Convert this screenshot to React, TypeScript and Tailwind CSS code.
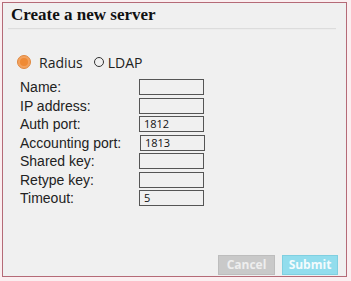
export default function App() {
  const rows: [string, string, string][] = [
    ["Name:", "", "ml-0"],
    ["IP address:", "", "ml-0"],
    ["Auth port:", "1812", "ml-0"],
    ["Accounting port:", "1813", "ml-[1px]"],
    ["Shared key:", "", "ml-0"],
    ["Retype key:", "", "ml-0"],
    ["Timeout:", "5", "ml-0"],
  ];
  return (
    <div className="w-[351px] h-[281px] bg-[#fbeef0] pt-[2px] pl-[2px]">
      <div className="w-[345px] h-[275px] border border-[#b56a77] bg-[#f0f0f0] flex flex-col">
        <div className="h-[25px] pl-[8px] pt-[1px] text-[17px] font-bold leading-[22px] text-[#111] [font-family:'Liberation_Serif',serif]">
          Create a new server
        </div>
        <div className="ml-[5px] mr-[10px] h-[2px] bg-[#dcdcdc] border-b border-[#ececec]" />
        <div className="text-[#222]">
          <div className="flex items-center h-[20px] mt-[22px] pl-[14px] [font-family:'Open_Sans',sans-serif]">
            <span className="w-[14px] h-[14px] rounded-full bg-[#f3a25e] border border-[#e0883f] flex items-center justify-center">
              <span className="w-[8px] h-[8px] rounded-full bg-[#ef8a35]" />
            </span>
            <span className="ml-[8px] text-[14px]">Radius</span>
            <span className="ml-[11px] w-[10px] h-[10px] rounded-full border border-[#333]" />
            <span className="ml-[4px] text-[14px]">LDAP</span>
          </div>
          <div className="flex flex-col mt-[6px] pl-[17px]">
            {rows.map(([label, value, off]) => (
              <div key={label} className="flex items-center h-[18.5px]">
                <span className="w-[119px] leading-[16px] text-[14px] [font-family:'Liberation_Sans',sans-serif]">{label}</span>
                <div
                  className={`${off} w-[65px] h-[16px] border border-[#555] bg-[#f0f0f0] text-[11px] leading-[14px] pl-[4px] text-[#111] [font-family:'Open_Sans',sans-serif]`}
                >
                  {value}
                </div>
              </div>
            ))}
          </div>
        </div>
        <div className="flex-1" />
        <div className="flex justify-end gap-[7px] pr-[8px] pb-[1px]">
          <div className="w-[57px] h-[20px] bg-[#c9c9c9] border border-[#bdbdbd] text-[#eeeeee] text-[12px] font-bold flex items-center justify-center [font-family:'Open_Sans',sans-serif]">
            Cancel
          </div>
          <div className="w-[56px] h-[20px] bg-[#92dded] border border-[#7fcfe0] text-[#f4fbfd] text-[12px] font-bold flex items-center justify-center [font-family:'Open_Sans',sans-serif]">
            Submit
          </div>
        </div>
      </div>
    </div>
  );
}
